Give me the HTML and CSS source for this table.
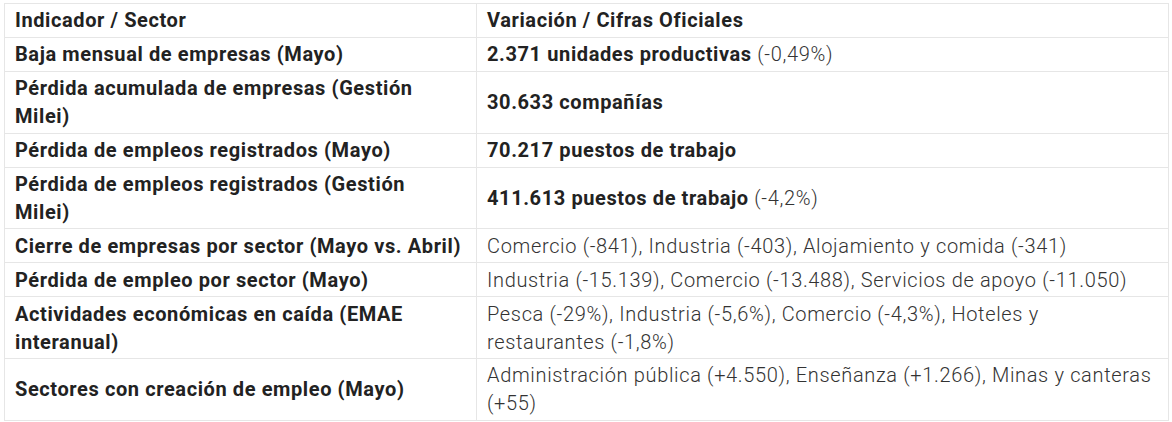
FILE: index.html
```html
<!DOCTYPE html>
<html lang="es">
<head>
<meta charset="utf-8">
<title>Indicadores</title>
<link rel="stylesheet" href="styles.css">
</head>
<body>
<table class="data">
  <colgroup><col class="c1"><col class="c2"></colgroup>
  <tr class="head"><th>Indicador / Sector</th><th>Variación / Cifras Oficiales</th></tr>
  <tr><th>Baja mensual de empresas (Mayo)</th><td><strong>2.371 unidades productivas</strong> (-0,49%)</td></tr>
  <tr><th>Pérdida acumulada de empresas (Gestión Milei)</th><td><strong>30.633 compañías</strong></td></tr>
  <tr><th>Pérdida de empleos registrados (Mayo)</th><td><strong>70.217 puestos de trabajo</strong></td></tr>
  <tr><th>Pérdida de empleos registrados (Gestión Milei)</th><td><strong>411.613 puestos de trabajo</strong> (-4,2%)</td></tr>
  <tr><th>Cierre de empresas por sector (Mayo vs. Abril)</th><td>Comercio (-841), Industria (-403), Alojamiento y comida (-341)</td></tr>
  <tr><th>Pérdida de empleo por sector (Mayo)</th><td>Industria (-15.139), Comercio (-13.488), Servicios de apoyo (-11.050)</td></tr>
  <tr><th>Actividades económicas en caída (EMAE interanual)</th><td>Pesca (-29%), Industria (-5,6%), Comercio (-4,3%), Hoteles y restaurantes (-1,8%)</td></tr>
  <tr><th>Sectores con creación de empleo (Mayo)</th><td>Administración pública (+4.550), Enseñanza (+1.266), Minas y canteras (+55)</td></tr>
</table>
</body>
</html>
```
FILE: styles.css
```css
html, body { margin: 0; padding: 0; background: #fff; }
body { padding: 3px 3px 0 4px; font-family: Roboto, "Liberation Sans", sans-serif; }
.data {
  border-collapse: collapse;
  table-layout: fixed;
  width: 1165px;
  font-size: 20px;
  line-height: 28px;
  letter-spacing: 0.6px;
}
.c1 { width: 472px; }
.data th, .data td {
  border: 1px solid #e6e6e6;
  padding: 2.45px 10px;
  text-align: left;
  vertical-align: middle;
}
.data th { font-weight: 700; color: #222; padding-right: 12px; }
.data td { font-weight: 300; color: #333; letter-spacing: 0.66px; }
.data strong { font-weight: 700; color: #222; letter-spacing: 0.6px; }
```
